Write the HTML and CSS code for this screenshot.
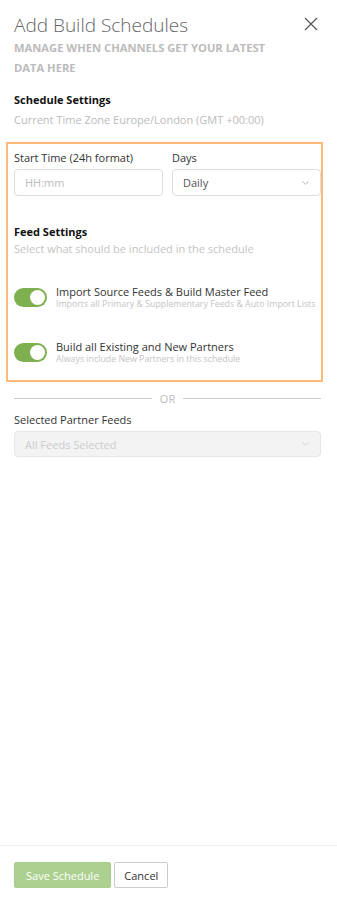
FILE: index.html
```html
<!DOCTYPE html>
<html lang="en">

<head>
    <meta charset="UTF-8">
    <meta name="viewport" content="width=device-width, initial-scale=1.0">
    <title>Add Build Schedules</title>
    <link rel="stylesheet" href="styles.css">
</head>

<body>
    <div class="panel">
        <div class="panel-header">
            <div>
                <h1 class="panel-title">Add Build Schedules</h1>
                <div class="panel-subtitle">Manage when channels get your latest data here</div>
            </div>
            <a class="close-btn" href="#">
                <svg width="14" height="14" viewBox="0 0 14 14">
                    <path d="M1 1L13 13M13 1L1 13" stroke="#555" stroke-width="1.2" fill="none" />
                </svg>
            </a>
        </div>

        <div class="section">
            <div class="section-title">Schedule Settings</div>
            <div class="section-desc">Current Time Zone Europe/London (GMT +00:00)</div>
        </div>

        <div class="highlight-box">
            <div class="field-row">
                <div class="field">
                    <label class="field-label">Start Time (24h format)</label>
                    <input class="text-input" type="text" placeholder="HH:mm">
                </div>
                <div class="field">
                    <label class="field-label">Days</label>
                    <div class="select-box">
                        <span>Daily</span>
                        <svg class="chevron" width="7" height="4" viewBox="0 0 7 4">
                            <path d="M0.5 0.5L3.5 3.3L6.5 0.5" stroke="#aaa" stroke-width="0.9" fill="none" />
                        </svg>
                    </div>
                </div>
            </div>

            <div class="feed-title">Feed Settings</div>
            <div class="feed-desc">Select what should be included in the schedule</div>

            <div class="toggle-row first">
                <span class="toggle on"><span class="knob"></span></span>
                <div class="toggle-text">
                    <div class="toggle-title">Import Source Feeds &amp; Build Master Feed</div>
                    <div class="toggle-sub">Imports all Primary &amp; Supplementary Feeds &amp; Auto Import Lists</div>
                </div>
            </div>

            <div class="toggle-row">
                <span class="toggle on"><span class="knob"></span></span>
                <div class="toggle-text">
                    <div class="toggle-title">Build all Existing and New Partners</div>
                    <div class="toggle-sub">Always include New Partners in this schedule</div>
                </div>
            </div>
        </div>

        <div class="divider"><span>OR</span></div>

        <label class="field-label partner-label">Selected Partner Feeds</label>
        <div class="select-box disabled">
            <span>All Feeds Selected</span>
            <svg class="chevron" width="7" height="4" viewBox="0 0 7 4">
                <path d="M0.5 0.5L3.5 3.3L6.5 0.5" stroke="#ccc" stroke-width="0.9" fill="none" />
            </svg>
        </div>
    </div>

    <div class="panel-footer">
        <button class="btn btn-save">Save Schedule</button>
        <button class="btn btn-cancel">Cancel</button>
    </div>
</body>

</html>
```

FILE: styles.css
```css
body {
    display: flex;
    flex-direction: column;
    min-height: 100vh;
    margin: 0;
    font-family: "Open Sans", Arial, sans-serif;
    font-size: 11px;
    background-color: #fff;
    color: #333;
}

.panel {
    flex: 1;
    padding: 0 16px 0 14px;
}

.panel-header {
    display: flex;
    justify-content: space-between;
    align-items: flex-start;
}

.panel-title {
    margin: 14px 0 0;
    font-size: 19px;
    font-weight: 300;
    line-height: 22px;
    color: #666;
}

.panel-subtitle {
    margin-top: 2px;
    max-width: 270px;
    font-size: 11.2px;
    font-weight: 700;
    line-height: 20px;
    text-transform: uppercase;
    color: #bbb;
}

.close-btn {
    display: block;
    margin-top: 17px;
    margin-right: 3px;
}

.section {
    margin-top: 13px;
}

.section-title,
.feed-title {
    font-weight: 700;
    line-height: 17px;
    color: #111;
}

.section-desc {
    margin-top: 3px;
    line-height: 17px;
    color: #bbb;
}

.highlight-box {
    margin: 14px -2px 0 -8px;
    padding: 5px 0 15px 6px;
    border: 2px solid #fdba7a;
}

.field-row {
    display: grid;
    grid-template-columns: 1fr 1fr;
    gap: 9px;
}

.field-label {
    display: block;
    line-height: 17px;
    color: #333;
}

.text-input,
.select-box {
    box-sizing: border-box;
    display: flex;
    align-items: center;
    width: 100%;
    height: 27px;
    margin-top: 3px;
    padding: 0 10px;
    border: 1px solid #ddd;
    border-radius: 4px;
    font-family: inherit;
    font-size: 11px;
    color: #555;
    background-color: #fff;
}

.text-input::placeholder {
    color: #bbb;
}

.select-box {
    justify-content: space-between;
}

.select-box .chevron {
    margin-right: 1px;
}

.select-box.disabled {
    height: 26px;
    margin-top: 3px;
    background-color: #f3f3f3;
    border-color: #e6e6e6;
    color: #ccc;
}

.feed-title {
    margin-top: 27px;
}

.feed-desc {
    line-height: 18px;
    color: #c4c4c4;
}

.toggle-row {
    display: flex;
    align-items: center;
    gap: 9px;
    margin-top: 29px;
}

.toggle-row.first {
    margin-top: 26px;
}

.toggle {
    position: relative;
    flex-shrink: 0;
    width: 33px;
    height: 19px;
    border-radius: 10px;
    background-color: #7fb04f;
}

.toggle .knob {
    position: absolute;
    top: 2px;
    right: 2px;
    width: 15px;
    height: 15px;
    border-radius: 50%;
    background-color: #fff;
}

.toggle-title {
    line-height: 15px;
    color: #333;
}

.toggle-sub {
    margin-top: -1px;
    font-size: 8.8px;
    line-height: 12px;
    white-space: nowrap;
    color: #c4c4c4;
}

.divider {
    display: flex;
    align-items: center;
    gap: 7px;
    margin-top: 8px;
    font-size: 11px;
    line-height: 17px;
    color: #bbb;
}

.divider::before,
.divider::after {
    content: "";
    flex: 1;
    height: 1px;
    background-color: #ccc;
}

.divider span {
    padding: 0 1px;
}

.partner-label {
    margin-top: 4px;
}

.panel-footer {
    display: flex;
    gap: 3px;
    padding: 16px 14px;
    border-top: 1px solid #eee;
}

.btn {
    height: 26px;
    border-radius: 2px;
    font-family: inherit;
    font-size: 11px;
    cursor: pointer;
}

.btn-save {
    padding: 0 11px;
    border: 1px solid #a9cd8b;
    background-color: #acd08f;
    color: #fff;
}

.btn-cancel {
    padding: 0 9px;
    border: 1px solid #ccc;
    background-color: #fff;
    color: #333;
}
```
